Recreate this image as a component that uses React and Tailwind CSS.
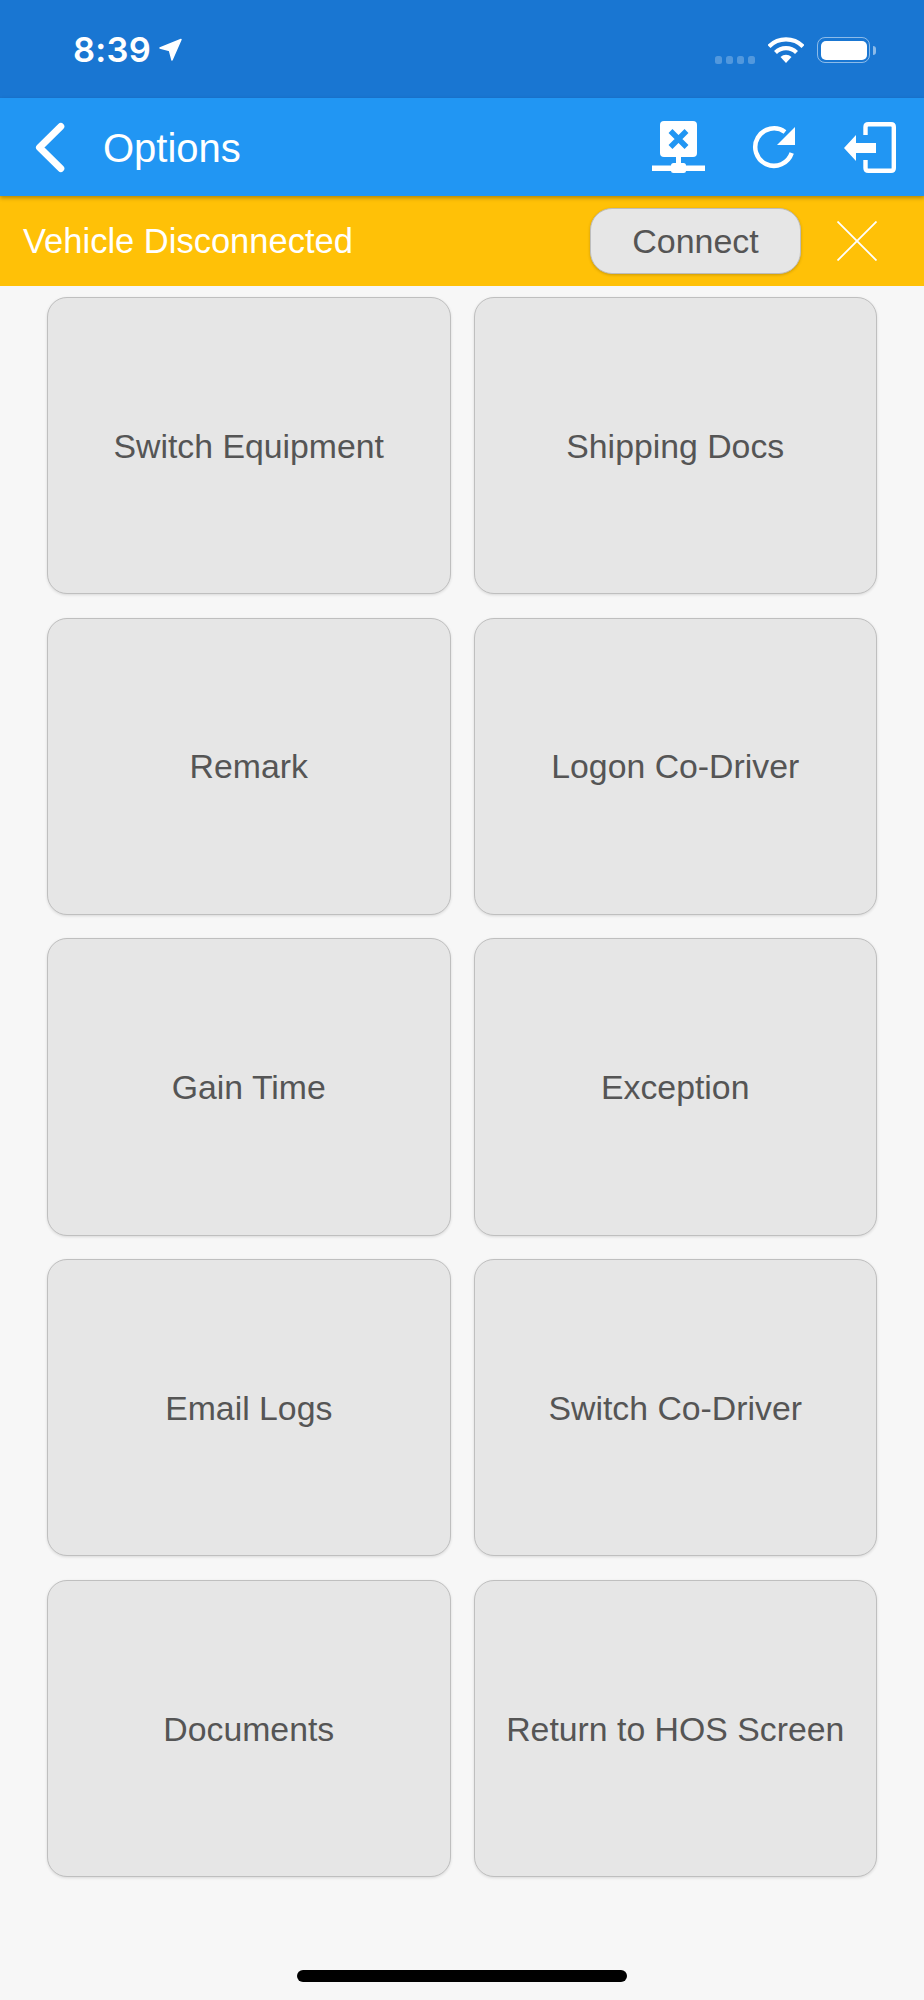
import React from 'react'

const options = [
  'Switch Equipment',
  'Shipping Docs',
  'Remark',
  'Logon Co-Driver',
  'Gain Time',
  'Exception',
  'Email Logs',
  'Switch Co-Driver',
  'Documents',
  'Return to HOS Screen',
]

const App = () => {
  return (
    <div className="w-[924px] h-[2000px] bg-[#f7f7f7] flex flex-col overflow-hidden font-['Liberation_Sans',sans-serif]">
      {/* Status bar */}
      <div className="h-[98px] shrink-0 bg-[#1976d2] flex items-center pt-[2px] pl-[73px] pr-[48px] text-white">
        <span className="text-[34.5px] leading-none font-semibold font-['Inter',sans-serif] tracking-[0.2px]">8:39</span>
        <svg width="24" height="24" viewBox="0 0 24 24" className="ml-[8px]">
          <path d="M1 10 L22 1.5 L13 22 L10.5 12.5 Z" fill="white" stroke="white" strokeWidth="1.5" strokeLinejoin="round" />
        </svg>
        <div className="ml-auto flex items-center">
          <div className="flex gap-[3.5px] mt-[20px] mr-[13px]">
            <span className="w-[7.5px] h-[7.5px] rounded-[2.5px] bg-white/25"></span>
            <span className="w-[7.5px] h-[7.5px] rounded-[2.5px] bg-white/25"></span>
            <span className="w-[7.5px] h-[7.5px] rounded-[2.5px] bg-white/25"></span>
            <span className="w-[7.5px] h-[7.5px] rounded-[2.5px] bg-white/25"></span>
          </div>
          <svg width="36" height="26" viewBox="0 0 36 26" className="mr-[13px]">
            <path d="M1 9.5 A24 24 0 0 1 35 9.5" fill="none" stroke="white" strokeWidth="4.2" />
            <path d="M7.5 15.5 A15 15 0 0 1 28.5 15.5" fill="none" stroke="white" strokeWidth="4.2" />
            <path d="M12.5 20 A8 8 0 0 1 23.5 20 L18 26 Z" fill="white" />
          </svg>
          <div className="w-[53px] h-[26px] rounded-[8px] border-[1.5px] border-white/50 p-[2.5px]">
            <div className="w-full h-full bg-white rounded-[5px]"></div>
          </div>
          <div className="w-[3px] h-[9px] ml-[3px] bg-white/50 rounded-r-[3px]"></div>
        </div>
      </div>

      {/* Nav bar */}
      <div className="relative z-10 h-[98px] shrink-0 bg-[#2196f3] flex items-center pr-[28px] shadow-[0_2px_4px_rgba(0,0,0,0.3)]">
        <svg width="36" height="52" viewBox="0 0 36 52" className="ml-[31px]">
          <path d="M29.8 5.5 L8.5 26.5 L29.8 47.5" fill="none" stroke="white" strokeWidth="7" strokeLinecap="round" strokeLinejoin="round" />
        </svg>
        <span className="ml-[36px] mt-[1px] text-white text-[40px] leading-none">Options</span>
        <svg width="53" height="52" viewBox="0 0 53 52" className="ml-auto">
          <rect x="8" y="0" width="37" height="36" rx="4" fill="white" />
          <path d="M18.5 10 L34.5 26 M34.5 10 L18.5 26" stroke="#2196f3" strokeWidth="5.5" />
          <rect x="24" y="36" width="5" height="10" fill="white" />
          <rect x="0" y="44.5" width="53" height="5.5" fill="white" />
          <rect x="19" y="42" width="15" height="10" rx="2.5" fill="white" />
        </svg>
        <svg width="44" height="46" viewBox="0 0 44 46" className="ml-[47px]">
          <path d="M39.7 29 A18.7 18.7 0 1 1 33 8" fill="none" stroke="white" strokeWidth="4.5" />
          <path d="M43 3 L43 21 L25 21 Z" fill="white" />
        </svg>
        <svg width="52" height="51" viewBox="0 0 52 51" className="ml-[48px]">
          <path d="M21.5 13 L21.5 5 Q21.5 2.2 24.3 2.2 L47 2.2 Q49.8 2.2 49.8 5 L49.8 46 Q49.8 48.8 47 48.8 L24.3 48.8 Q21.5 48.8 21.5 46 L21.5 38" fill="none" stroke="white" strokeWidth="4.4" />
          <path d="M0 26 L12 13 L12 21 L32 21 L32 31 L12 31 L12 39 Z" fill="white" />
        </svg>
      </div>

      {/* Disconnected banner */}
      <div className="h-[90px] shrink-0 bg-[#ffc107] flex items-center pl-[23px] pr-[47px]">
        <span className="text-white text-[34.5px] leading-none">Vehicle Disconnected</span>
        <button className="ml-auto w-[211px] h-[66px] rounded-[22px] bg-[#e6e6e6] border border-[#bdbdbd] shadow-[0_1px_3px_rgba(0,0,0,0.2)] text-[#555555] text-[34px] leading-none">
          Connect
        </button>
        <svg width="40" height="40" viewBox="0 0 40 40" className="ml-[36px]">
          <path d="M0.5 0.5 L39.5 39.5 M39.5 0.5 L0.5 39.5" stroke="white" strokeWidth="1.8" />
        </svg>
      </div>

      {/* Option buttons */}
      <div className="grid grid-cols-2 gap-x-[23px] gap-y-[23.3px] pt-[11px] px-[47px]">
        {options.map((label) => (
          <button
            key={label}
            className="h-[297.4px] pt-[2px] rounded-[20px] bg-[#e6e6e6] border border-[#bfbfbf] shadow-[0_1px_3px_rgba(0,0,0,0.12)] text-[#555555] text-[33.8px] leading-none"
          >
            {label}
          </button>
        ))}
      </div>

      {/* Home indicator */}
      <div className="w-[330px] h-[11.5px] mx-auto mt-[93.3px] rounded-full bg-black"></div>
    </div>
  )
}

export default App
